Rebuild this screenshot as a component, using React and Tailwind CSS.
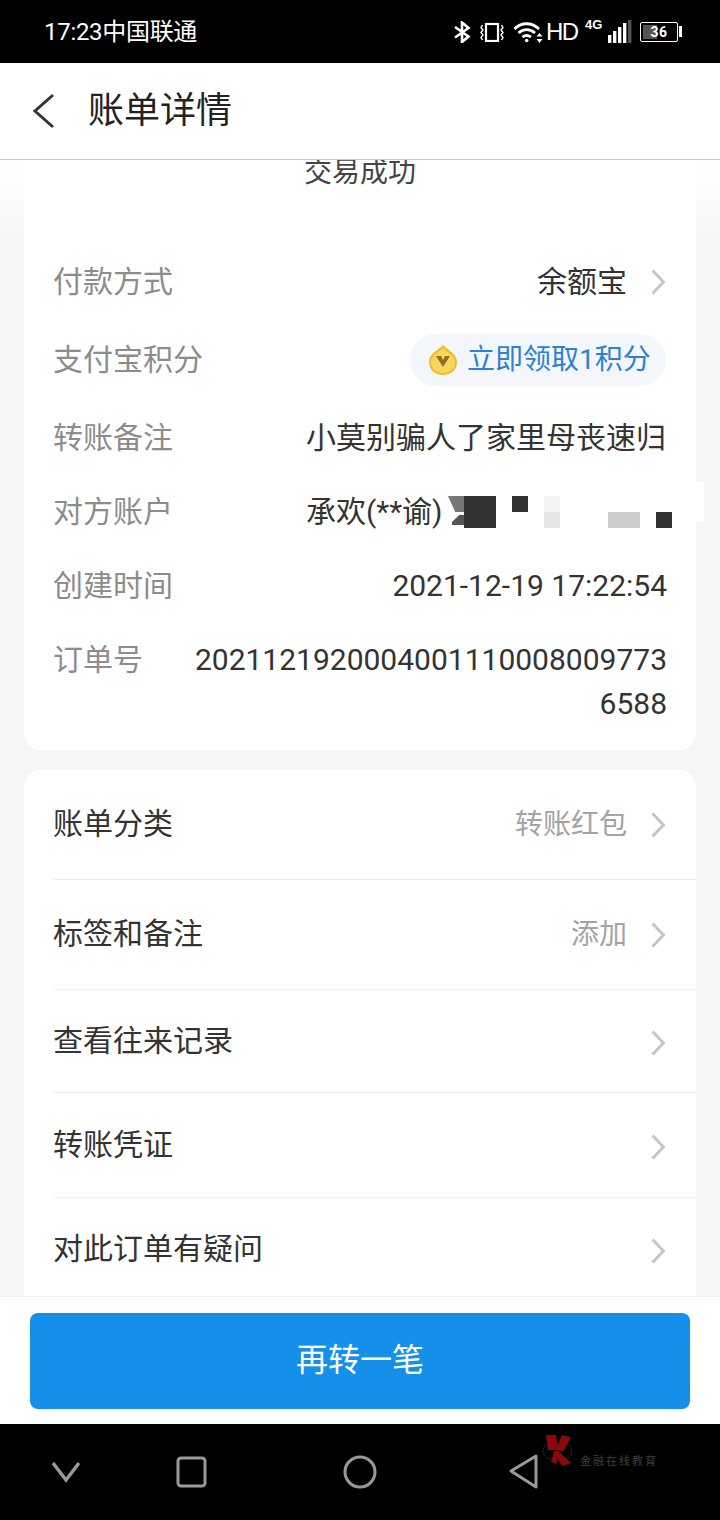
const font = "font-['Roboto','Noto_Sans_CJK_SC',sans-serif]";

function Chevron({ className = "" }) {
  return (
    <svg width="16" height="28" viewBox="0 0 16 28" fill="none" stroke="#c4c4c4" strokeWidth="2.8" className={`ml-[23px] shrink-0 ${className}`}>
      <path d="M2.5 2.5 L13.5 14 L2.5 25.5" />
    </svg>
  );
}

function StatusBar() {
  return (
    <div className="h-[63px] shrink-0 bg-black text-white flex items-center pl-[44px] pr-[38px]">
      <span className="text-[24px] leading-none mt-[1px] tracking-[-0.3px]">17:23中国联通</span>
      <div className="ml-auto flex items-center h-full">
        <svg width="18" height="22" viewBox="0 0 18 22" fill="none" stroke="#fff" strokeWidth="2.6">
          <path d="M2 6 L15.5 15.5 L9 21 V1.5 L15.5 7 L2 16.5" />
        </svg>
        <svg width="24" height="20" viewBox="0 0 24 20" fill="none" stroke="#fff" className="ml-[9px]">
          <rect x="6" y="2" width="12" height="17" strokeWidth="2.2" />
          <path d="M2.5 3 L1 5.5 L3 8 L1 10.5 L3 13 L1 15.5 L2.5 18 M21.5 3 L23 5.5 L21 8 L23 10.5 L21 13 L23 15.5 L21.5 18" strokeWidth="1.4" />
        </svg>
        <svg width="30" height="22" viewBox="0 0 30 22" fill="none" stroke="#fff" strokeWidth="2.8" className="ml-[9px]">
          <path d="M1.5 8 C8 1 19 1 26 8" />
          <path d="M5.5 12 C10 7.5 17 7.5 22 12" />
          <path d="M9.5 16 C12 14 15 14 18 16" />
          <circle cx="13.7" cy="19.5" r="1.8" fill="#fff" stroke="none" />
          <path d="M26.5 12 L29.5 15.5 H23.5 Z M26.5 22 L29.5 18 H23.5 Z" fill="#fff" stroke="none" />
        </svg>
        <span className="ml-[3px] w-[32px] text-[24px] leading-none tracking-[-1.5px] whitespace-nowrap font-['Liberation_Sans',sans-serif]">HD</span>
        <span className="ml-[7px] w-[17px] mb-[14px] text-[13px] leading-none font-bold font-['Liberation_Sans',sans-serif]">4G</span>
        <svg width="24" height="24" viewBox="0 0 24 24" fill="#fff" className="ml-[6px]">
          <rect x="0" y="15" width="3.4" height="8" />
          <rect x="5" y="11" width="3.4" height="12" />
          <rect x="10" y="7" width="3.4" height="16" />
          <rect x="15" y="3" width="3.4" height="20" />
          <rect x="20" y="0" width="3.4" height="23" fill="#555" />
        </svg>
        <div className="ml-[8px] w-[38px] h-[20px] rounded-[2px] border-[1.5px] border-white p-[2px] relative">
          <div className="h-full w-[14px] bg-[#555]" />
          <span className="absolute inset-0 flex items-center justify-center text-[14px] leading-none font-bold tracking-[0.5px]">36</span>
        </div>
        <div className="ml-[1px] w-[3px] h-[11px] bg-white" />
      </div>
    </div>
  );
}

function DetailRow({ label, height, pad = "pr-[30px]", children }) {
  return (
    <div className={`flex items-center justify-between pl-[29px] ${pad} ${height}`}>
      <span className="text-[30px] leading-none text-[#8c8c8c] shrink-0">{label}</span>
      {children}
    </div>
  );
}

function LinkRow({ label, value, height, labelClass = "", chevronClass = "", border = true }) {
  return (
    <div className={`${height} ml-[29px] pr-[30px] flex items-center ${border ? "border-b border-[#eeeeee]" : ""}`}>
      <span className={`text-[30px] leading-none text-[#333333] ${labelClass}`}>{label}</span>
      <span className="ml-auto text-[28px] leading-none text-[#a3a3a3]">{value}</span>
      <Chevron className={chevronClass} />
    </div>
  );
}

function Mosaic() {
  return (
    <div className="absolute left-[422px] top-[5px] w-[258px] h-[40px] bg-white">
      <div className="absolute left-[2px] top-[14px] w-[16px] h-[16px] bg-[#777777] [clip-path:polygon(0_0,100%_0,100%_100%,45%_100%)]" />
      <div className="absolute left-[6px] top-[33px] w-[12px] h-[10px] bg-[#555555] [clip-path:polygon(60%_0,100%_0,100%_100%,0_100%,0_70%)]" />
      <div className="absolute left-[18px] top-[14px] w-[32px] h-[32px] bg-[#333333]" />
      <div className="absolute left-[66px] top-[14px] w-[16px] h-[16px] bg-[#333333]" />
      <div className="absolute left-[98px] top-[14px] w-[16px] h-[16px] bg-[#f3f3f3]" />
      <div className="absolute left-[98px] top-[30px] w-[16px] h-[16px] bg-[#e5e5e5]" />
      <div className="absolute left-[162px] top-[30px] w-[32px] h-[16px] bg-[#cccccc]" />
      <div className="absolute left-[210px] top-[30px] w-[16px] h-[16px] bg-[#333333]" />
    </div>
  );
}

export default function App() {
  return (
    <div className={`w-[720px] h-[1520px] flex flex-col overflow-hidden bg-white ${font}`}>
      <StatusBar />

      <div className="h-[97px] shrink-0 bg-white border-b border-[#cccccc] flex items-center pl-[32px]">
        <svg width="24" height="36" viewBox="0 0 24 36" fill="none" stroke="#333333" strokeWidth="3">
          <path d="M21 2 L3 18 L21 34" />
        </svg>
        <span className="ml-[32px] text-[36px] leading-none text-[#222222]">账单详情</span>
      </div>

      <div className="flex-1 min-h-0 overflow-hidden px-[24px] bg-linear-to-b from-white to-[#f5f5f5] to-[90px]">
        <div className="bg-white rounded-b-[16px] h-[590px] relative">
          <div className="h-[26px] flex items-center justify-center text-[28px] leading-none text-[#444444]">交易成功</div>
          <div className="h-[57px]" />
          <DetailRow label="付款方式" height="h-[78px]">
            <div className="flex items-center">
              <span className="text-[30px] leading-none text-[#333333]">余额宝</span>
              <Chevron />
            </div>
          </DetailRow>
          <DetailRow label="支付宝积分" height="h-[78px]">
            <div className="h-[52px] w-[256px] rounded-full bg-[#f3f7fc] flex items-center pl-[18px]">
              <svg width="30" height="32" viewBox="0 0 30 32">
                <path d="M15 1 C18 5 29 9 29 18 C29 26 23 31 15 31 C7 31 1 26 1 18 C1 9 12 5 15 1 Z" fill="#f0bd30" />
                <path d="M15 4 C18 8 27 11 27 18 C27 25 22 29 15 29 C8 29 3 25 3 18 C3 11 12 8 15 4 Z" fill="#f9d75f" />
                <path d="M8 12 H13 L15 16 L17 12 H22 L15 23 Z" fill="#8f701c" />
              </svg>
              <span className="ml-[9px] text-[28px] leading-none text-[#2f7fd6]">立即领取1积分</span>
            </div>
          </DetailRow>
          <DetailRow label="转账备注" height="h-[78px]">
            <span className="text-[30px] leading-none text-[#333333]">小莫别骗人了家里母丧速归</span>
          </DetailRow>
          <div className="relative">
            <div className="h-[70px] pl-[29px] flex items-center">
              <span className="text-[30px] leading-none text-[#8c8c8c]">对方账户</span>
              <span className="ml-[133px] text-[30px] leading-none text-[#333333] whitespace-nowrap">承欢(**谕)</span>
            </div>
            <Mosaic />
          </div>
          <DetailRow label="创建时间" height="h-[78px]" pad="pr-[29px]">
            <span className="text-[30px] leading-none text-[#333333]">2021-12-19 17:22:54</span>
          </DetailRow>
          <div className="flex justify-between pl-[29px] pr-[29px] pt-[13px]">
            <span className="text-[30px] leading-[44px] text-[#8c8c8c] shrink-0">订单号</span>
            <span className="w-[474px] text-right text-[30px] leading-[44px] text-[#333333] break-all">20211219200040011100080097736588</span>
          </div>
        </div>

        <div className="mt-[20px] bg-white rounded-t-[16px] h-[560px]">
          <LinkRow label="账单分类" value="转账红包" height="h-[110px]" labelClass="mb-[2px]" />
          <LinkRow label="标签和备注" value="添加" height="h-[110px]" labelClass="mb-[2px]" />
          <LinkRow label="查看往来记录" height="h-[103px]" chevronClass="mt-[3px]" />
          <LinkRow label="转账凭证" height="h-[105px]" chevronClass="mt-[3px]" />
          <LinkRow label="对此订单有疑问" height="h-[104px]" labelClass="mb-[2px]" chevronClass="mt-[2px]" border={false} />
        </div>
      </div>

      <div className="h-[128px] shrink-0 bg-white border-t border-[#f0f0f0] px-[30px] pt-[16px]">
        <button className="w-full h-[96px] rounded-[8px] bg-[#1490ea] text-white text-[32px] leading-none pb-[2px]">再转一笔</button>
      </div>

      <div className="h-[96px] shrink-0 bg-black relative flex items-center">
        <svg width="30" height="24" viewBox="0 0 30 24" fill="none" stroke="#9a9a9a" strokeWidth="3.4" className="ml-[51px] mt-[-1px]">
          <path d="M2 3 L15 20 L28 3" />
        </svg>
        <svg width="32" height="32" viewBox="0 0 32 32" fill="none" stroke="#9a9a9a" strokeWidth="3" className="ml-[95px]">
          <rect x="2" y="2" width="27" height="28" rx="3" />
        </svg>
        <svg width="34" height="34" viewBox="0 0 34 34" fill="none" stroke="#9a9a9a" strokeWidth="3" className="ml-[135px]">
          <circle cx="17" cy="17" r="15" />
        </svg>
        <svg width="30" height="36" viewBox="0 0 30 36" fill="none" stroke="#9a9a9a" strokeWidth="3" strokeLinejoin="round" className="ml-[132px]">
          <path d="M27 2 V33 L2 17 Z" />
        </svg>
        <div className="absolute left-[541px] top-[8px] flex items-start">
          <svg width="34" height="36" viewBox="0 0 34 36">
            <circle cx="10" cy="19" r="8" fill="none" stroke="#222222" />
            <circle cx="23" cy="19" r="8" fill="none" stroke="#222222" />
            <path d="M5 3 H15 L17 18 H7 Z" fill="#8a0a0a" />
            <path d="M21 3 L30 5 L22 20 L15 17 Z" fill="#8a0a0a" />
            <path d="M16 18 L30 31 L21 34 L12 20 Z" fill="#8a0a0a" />
            <path d="M13 20 L18 24 L15 32 L10 30 Z" fill="#8a0a0a" />
          </svg>
          <span className="ml-[5px] mt-[24px] text-[11px] leading-none tracking-[2px] text-[#3f3f3f] whitespace-nowrap">金融在线教育</span>
        </div>
      </div>
    </div>
  );
}
